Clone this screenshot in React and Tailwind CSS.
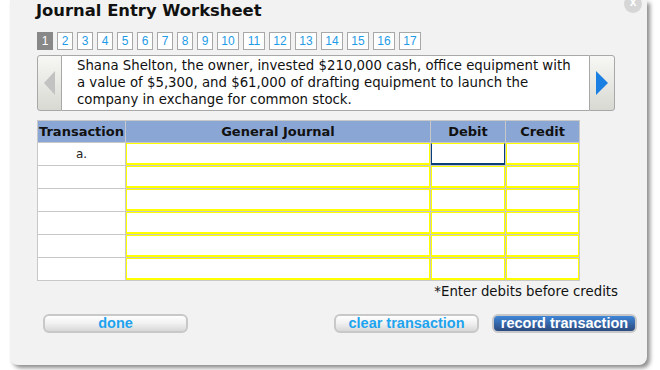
import React from "react";

const tabs = Array.from({ length: 17 }, (_, i) => i + 1);
const rows = ["a.", "", "", "", "", ""];

const Tab = ({ n }) => {
    const active = n === 1;
    return (
        <div
            className={`h-[18px] flex items-center justify-center border text-[12px] leading-none ${
                n > 9 ? "w-[22px]" : "w-[16px]"
            } ${active ? "bg-[#888888] border-[#888888] text-white" : "bg-white border-[#a8a8a8] text-[#1e9be6]"}`}
        >
            {n}
        </div>
    );
};

const InputCell = ({ focused }) => (
    <div className="bg-white h-full p-0">
        <div
            className={`h-full border border-b-2 ${
                focused ? "border-[#0b3f7a] border-t-[#ffff00]" : "border-[#ffff00]"
            }`}
        />
    </div>
);

const App = () => {
    return (
        <div className="w-[660px] h-[370px] bg-white overflow-hidden" style={{ fontFamily: '"DejaVu Sans", Verdana, sans-serif' }}>
            <div className="relative ml-[10px] w-[637px] h-[365px] bg-[#f2f2f2] rounded-b-[8px] shadow-[3px_3px_4px_rgba(0,0,0,0.45)] pl-[26px]">
                {/* close */}
                <div
                    className="absolute left-[614px] top-[-5px] w-[18px] h-[18px] rounded-full bg-[#d6d6d6] text-white text-[12px] font-bold flex items-end justify-center pb-[2px]"
                    style={{ fontFamily: '"Liberation Sans", Arial, sans-serif' }}
                >
                    x
                </div>

                <h1 className="text-[16.4px] font-bold text-[#111] leading-[22px]">Journal Entry Worksheet</h1>

                <div className="flex gap-[4px] mt-[10px] ml-[1px]" style={{ fontFamily: '"Liberation Sans", Arial, sans-serif' }}>
                    {tabs.map((n) => (
                        <Tab key={n} n={n} />
                    ))}
                </div>

                <div className="flex mt-[5px] ml-[1px] h-[56px] w-[578px]">
                    <div className="w-[25px] h-full border border-[#a8a8a8] rounded-l-[3px] bg-gradient-to-b from-[#f7f7f5] to-[#d9d9d3] flex items-center justify-center">
                        <svg width="12" height="24" viewBox="0 0 12 24">
                            <polygon points="11,0 11,24 0,12" fill="#c2c2c2" />
                        </svg>
                    </div>
                    <div className="flex-1 bg-white border-y border-[#a8a8a8] pl-[15px] pt-[1px] text-[13.3px] leading-[17px] text-[#111] whitespace-nowrap">
                        Shana Shelton, the owner, invested $210,000 cash, office equipment with
                        <br />
                        a value of $5,300, and $61,000 of drafting equipment to launch the
                        <br />
                        company in exchange for common stock.
                    </div>
                    <div className="w-[26px] h-full border border-[#a8a8a8] rounded-r-[3px] bg-gradient-to-b from-[#f7f7f5] to-[#d9d9d3] flex items-center justify-center">
                        <svg width="12" height="24" viewBox="0 0 12 24">
                            <polygon points="0,0 0,24 12,12" fill="#1a7fe2" />
                        </svg>
                    </div>
                </div>

                <div className="mt-[9px] ml-[1px] w-[543px] border border-[#c8c8c8] bg-[#c8c8c8] grid grid-cols-[87px_304px_74px_73px] gap-[1px]">
                    {["Transaction", "General Journal", "Debit", "Credit"].map((h) => (
                        <div key={h} className="h-[21px] bg-[#8aa6d5] flex items-center justify-center text-[13px] font-bold text-[#111]">
                            {h}
                        </div>
                    ))}
                    {rows.map((t, i) => (
                        <React.Fragment key={i}>
                            <div className="h-[22px] bg-white flex items-center justify-center text-[12px] text-[#222]">{t}</div>
                            <InputCell />
                            <InputCell focused={i === 0} />
                            <InputCell />
                        </React.Fragment>
                    ))}
                </div>

                <div className="w-[582px] text-right text-[13.3px] leading-[17px] text-[#111] mt-[2px]">*Enter debits before credits</div>

                <div className="flex mt-[14px] ml-[7px] w-[594px] text-[14.5px] font-bold" style={{ fontFamily: '"Liberation Sans", Arial, sans-serif' }}>
                    <button className="w-[145px] h-[19px] rounded-[6px] border-2 border-[#c8c8c8] bg-gradient-to-b from-white via-[#f0f0f0] to-[#d8d8d8] text-[#1ea3ee] leading-none">
                        done
                    </button>
                    <button className="ml-auto w-[145px] h-[19px] rounded-[6px] border-2 border-[#c8c8c8] bg-gradient-to-b from-white via-[#f0f0f0] to-[#d8d8d8] text-[#1ea3ee] leading-none">
                        clear transaction
                    </button>
                    <button className="ml-[13px] w-[145px] h-[19px] rounded-[6px] border-2 border-[#c8c8c8] bg-gradient-to-b from-[#3f86d8] to-[#2b4a7e] text-white leading-none">
                        record transaction
                    </button>
                </div>
            </div>
        </div>
    );
};

export default App;
